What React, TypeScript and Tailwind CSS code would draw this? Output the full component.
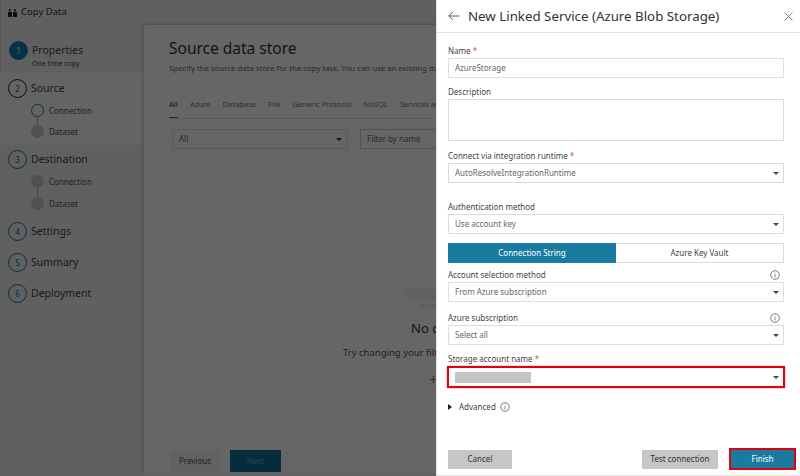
const font = { fontFamily: '"Noto Sans", "Open Sans", sans-serif' }

function Step({ n, label, filled, ring }: { n: number; label: string; filled?: boolean; ring: string }) {
  return (
    <div className="flex items-center gap-[4px] pl-[8px]">
      <div
        className={`w-[19px] h-[19px] rounded-full border flex items-center justify-center text-[8px] ${ring} ${
          filled ? 'bg-[#0a7fad] text-white' : 'text-[#0a6a90]'
        }`}
      >
        {n}
      </div>
      <span className="text-[10.5px] leading-none text-[#444]">{label}</span>
    </div>
  )
}

function SubStep({ label, active }: { label: string; active?: boolean }) {
  return (
    <div className="flex items-center gap-[5px] pl-[31px] h-[13px]">
      <div
        className={`w-[13px] h-[13px] rounded-full ${active ? 'border border-[#1283ad]' : 'bg-[#c9c9c9]'}`}
      />
      <span className="text-[8px] leading-none text-[#555]">{label}</span>
    </div>
  )
}

function Connector({ h }: { h: string }) {
  return <div className={`ml-[37px] w-px bg-[#aaa] ${h}`} />
}

function Sidebar() {
  return (
    <div className="w-[144px] shrink-0 bg-[#f1f1f1] flex flex-col">
      <div className="pt-[41px] h-[73px] border-l border-[#ddd]">
        <Step n={1} label="Properties" filled ring="border-[#0a7fad]" />
        <div className="pl-[31px] -mt-[1px] text-[7px] leading-[9px] text-[#444]">One time copy</div>
      </div>
      <div className="h-[72px] bg-[#fafafa] pt-[6px]">
        <Step n={2} label="Source" ring="border-[#222]" />
        <div className="mt-[6px]">
          <SubStep label="Connection" active />
          <Connector h="h-[8px]" />
          <SubStep label="Dataset" />
        </div>
      </div>
      <div className="pt-[5px]">
        <Step n={3} label="Destination" ring="border-[#0a7fad]" />
        <div className="mt-[6px]">
          <SubStep label="Connection" />
          <Connector h="h-[9px]" />
          <SubStep label="Dataset" />
        </div>
        <div className="mt-[12px] flex flex-col gap-[12px]">
          <Step n={4} label="Settings" ring="border-[#0a7fad]" />
          <Step n={5} label="Summary" ring="border-[#0a7fad]" />
          <Step n={6} label="Deployment" ring="border-[#0a7fad]" />
        </div>
      </div>
    </div>
  )
}

function SourcePage() {
  const tabs = ['Azure', 'Database', 'File', 'Generic Protocol', 'NoSQL', 'Services and apps']
  return (
    <div className="mt-[25px] flex-1 min-w-0 bg-white shadow-[0_0_4px_rgba(0,0,0,0.35)] pl-[25px] pr-0 flex flex-col overflow-hidden">
      <h1 className="mt-[11px] text-[15.5px] leading-[24px] text-[#333] whitespace-nowrap">Source data store</h1>
      <p className="mt-[2px] text-[7.8px] leading-[12px] text-[#666] whitespace-nowrap">
        Specify the source data store for the copy task. You can use an existing data store connection or create a new one.
      </p>
      <div className="mt-[24px] flex gap-[12px] text-[7.6px] leading-[12px] text-[#777] border-b border-[#e3e3e3] h-[21px] whitespace-nowrap w-[800px]">
        <span className="text-[#333] border-b border-[#0a7fad] h-[20px] w-[9px]">All</span>
        {tabs.map((t) => (
          <span key={t}>{t}</span>
        ))}
      </div>
      <div className="mt-[10px] flex gap-[12px] ml-[3px] text-[8px] text-[#666]">
        <div className="w-[176px] shrink-0 h-[20px] border border-[#e1e1e1] flex items-center justify-between pl-[6px] pr-[5px]">
          <span>All</span>
          <div className="w-0 h-0 border-x-[3px] border-x-transparent border-t-[3px] border-t-[#333]" />
        </div>
        <div className="w-[180px] shrink-0 h-[20px] border border-[#cfcfcf] flex items-center pl-[6px]">Filter by name</div>
      </div>
      <div className="mt-[138px] ml-[234px] w-[100px] shrink-0 h-[12px] rounded-full bg-[#f2f2f2]" />
      <div className="mt-[5px] ml-[251px] w-[80px] shrink-0 h-[5px] rounded-full bg-[#f2f2f2]" />
      <div className="mt-[10px] ml-[242px] text-[13px] leading-[18px] text-[#333] whitespace-nowrap">No connections found</div>
      <div className="mt-[9px] ml-[174px] text-[9.5px] leading-[13px] text-[#555] whitespace-nowrap">
        Try changing your filters or create a new connection
      </div>
      <div className="mt-[12px] ml-[260px] text-[15px] leading-[16px] font-light text-[#444]">+</div>
      <div className="mt-auto mb-[1px] flex gap-[10px] ml-[1px]">
        <div className="w-[50px] h-[22px] bg-[#f4f4f4] flex items-center justify-center text-[8px] text-[#555]">Previous</div>
        <div className="w-[51px] h-[22px] bg-[#0a6f99] flex items-center justify-center text-[8px] text-[#7fa5b5]">Next</div>
      </div>
    </div>
  )
}

function Caret() {
  return <div className="w-0 h-0 border-x-[3px] border-x-transparent border-t-[3px] border-t-[#444]" />
}

function Label({ text, required, info, className }: { text: string; required?: boolean; info?: boolean; className?: string }) {
  return (
    <div className={`flex items-center justify-between pr-[4px] text-[8px] leading-[12px] text-[#444] ${className ?? ''}`}>
      <span>
        {text}
        {required && <span className="text-[#d9534f]"> *</span>}
      </span>
      {info && <InfoIcon />}
    </div>
  )
}

function InfoIcon() {
  return (
    <svg width="10" height="10" viewBox="0 0 10 10" fill="none" stroke="#444" strokeWidth="0.7">
      <circle cx="5" cy="5" r="4.3" />
      <path d="M5 4.3V7.4M5 2.6V3.4" />
    </svg>
  )
}

function Select({ value }: { value: string }) {
  return (
    <div className="mt-[1px] h-[20px] border border-[#dcdcdc] flex items-center justify-between pl-[6px] pr-[4px] text-[8px] text-[#666]">
      <span>{value}</span>
      <Caret />
    </div>
  )
}

function LinkedServicePanel() {
  return (
    <div className="absolute left-[436px] top-0 right-0 bottom-0 bg-white border-l border-b border-[#e4e4e4] flex flex-col">
      <div className="h-[33px] shrink-0 border-b border-[#dfdfdf] flex items-center pl-[11px] pr-[7px]">
        <svg width="12" height="10" viewBox="0 0 12 10" fill="none" stroke="#333" strokeWidth="0.8">
          <path d="M11.5 5H.8M5 .8.8 5 5 9.2" />
        </svg>
        <h2 className="ml-[8px] text-[13.3px] leading-[20px] text-[#333] whitespace-nowrap">New Linked Service (Azure Blob Storage)</h2>
        <svg className="ml-auto" width="9" height="9" viewBox="0 0 9 9" fill="none" stroke="#555" strokeWidth="0.7">
          <path d="M.5.5l8 8M8.5.5l-8 8" />
        </svg>
      </div>

      <div className="pl-[11px] pr-[16px] flex-1 flex flex-col">
        <Label text="Name" required className="mt-[12px]" />
        <div className="mt-[1px] h-[20px] border border-[#dcdcdc] flex items-center pl-[6px] text-[8px] text-[#666]">AzureStorage</div>

        <Label text="Description" className="mt-[8px]" />
        <div className="mt-[1px] h-[42px] border border-[#dcdcdc]" />

        <Label text="Connect via integration runtime" required className="mt-[9px]" />
        <Select value="AutoResolveIntegrationRuntime" />

        <Label text="Authentication method" className="mt-[18px]" />
        <Select value="Use account key" />

        <div className="mt-[9px] h-[20px] flex text-[8px]">
          <div className="w-[168px] bg-[#1a7ba1] text-white flex items-center justify-center">Connection String</div>
          <div className="flex-1 border border-l-0 border-[#dcdcdc] text-[#444] flex items-center justify-center">Azure Key Vault</div>
        </div>

        <Label text="Account selection method" info className="mt-[6px]" />
        <Select value="From Azure subscription" />

        <Label text="Azure subscription" info className="mt-[10px]" />
        <Select value="Select all" />

        <Label text="Storage account name" required className="mt-[8px]" />
        <div className="mt-[1px] h-[22px] -mx-[1px] border-2 border-[#e2000f] flex items-center justify-between pl-[6px] pr-[4px] shadow-[0_0_2px_rgba(0,0,0,0.4)]">
          <div className="w-[76px] h-[11px] bg-[#c4c4c4]" />
          <Caret />
        </div>

        <div className="mt-[13px] flex items-center text-[8px] leading-[12px] text-[#444]">
          <div className="w-0 h-0 border-y-[3px] border-y-transparent border-l-[4px] border-l-[#222]" />
          <span className="ml-[7px] mr-[4px]">Advanced</span>
          <InfoIcon />
        </div>

        <div className="mt-auto mb-[5px] flex items-center text-[8px] text-[#333] -mr-[12px]">
          <div className="w-[64px] h-[19px] bg-[#c6c6c6] flex items-center justify-center">Cancel</div>
          <div className="ml-auto w-[76px] h-[19px] bg-[#c6c6c6] flex items-center justify-center">Test connection</div>
          <div className="ml-[11px] w-[67px] h-[22px] border-2 border-[#e2000f] bg-[#1a7ba1] text-white flex items-center justify-center">Finish</div>
        </div>
      </div>
    </div>
  )
}

export default function App() {
  return (
    <div className="relative w-[800px] h-[476px] overflow-hidden bg-[#f1f1f1] flex flex-col" style={font}>
      <div className="h-[25px] shrink-0 flex items-center pl-[8px] text-[9.5px] text-[#333] absolute top-0 left-0 z-0 gap-[4px]">
        <svg width="9" height="9" viewBox="0 0 9 9" fill="#222">
          <rect x="0" y="4" width="4" height="5" rx="0.6" />
          <rect x="5" y="4" width="4" height="5" rx="0.6" />
          <rect x="1" y="1" width="1.6" height="2.4" />
          <rect x="6.2" y="1" width="1.6" height="2.4" />
        </svg>
        Copy Data
      </div>
      {/* left part stops where the flyout starts, so its long texts get cut there */}
      <div className="flex flex-1 min-h-0 mb-[3px] w-[436px] overflow-hidden">
        <Sidebar />
        <SourcePage />
      </div>
      {/* modal scrim behind the flyout */}
      <div className="absolute inset-0 bg-black/60" />
      <LinkedServicePanel />
    </div>
  )
}
